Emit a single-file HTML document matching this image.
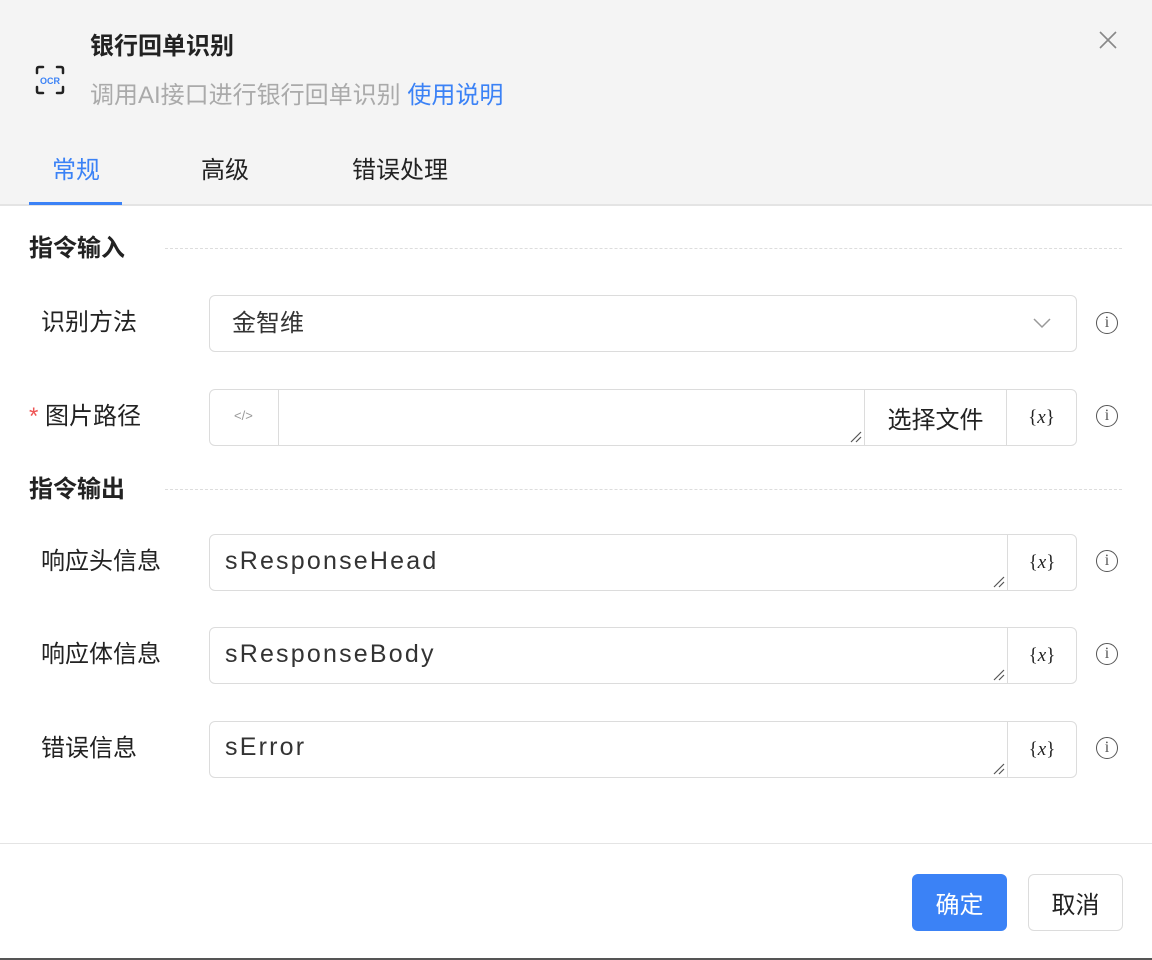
<!DOCTYPE html>
<html><head><meta charset="utf-8"><style>
*{box-sizing:border-box;margin:0;padding:0}
body{width:1152px;height:960px;background:#fff;font-family:"Liberation Sans","Noto Sans CJK SC",sans-serif;position:relative;overflow:hidden;color:#222}
.hdr{position:absolute;left:0;top:0;width:1152px;height:206px;background:#f4f4f4;border-bottom:2px solid #e4e4e4}
.abs{position:absolute}
.lbl{position:absolute;left:41px;font-size:24px;color:#222;line-height:32px}
.sec{position:absolute;left:29px;font-size:24px;font-weight:bold;line-height:32px}
.dash{position:absolute;left:165px;width:957px;border-top:1px dashed #ddd}
.box{position:absolute;border:1px solid #dcdcdc;border-radius:6px;background:#fff}
.cell{position:absolute;top:0;bottom:0;border-left:1px solid #dcdcdc;display:flex;align-items:center;justify-content:center}
.val{position:absolute;left:15px;top:11px;font-size:25px;letter-spacing:2.2px;color:#333;line-height:30px}
.x{font-family:"Liberation Serif",serif;font-size:19px;color:#222}
.info{position:absolute;left:1096px;width:22px;height:22px;border:1.3px solid #555;border-radius:50%;font-family:"Liberation Serif",serif;font-size:16px;line-height:20px;text-align:center;color:#555}
.grip{position:absolute;right:2px;bottom:2px;width:12px;height:12px}
</style></head><body>
<div class="hdr">
 <svg class="abs" style="left:34px;top:64px" width="32" height="32" viewBox="0 0 32 32" fill="none" stroke="#222" stroke-width="2.5" stroke-linecap="round"><path d="M3 9V5Q3 3 5 3H9M23 3H27Q29 3 29 5V9M29 23V27Q29 29 27 29H23M9 29H5Q3 29 3 27V23"/><text x="16" y="20" font-size="9" font-weight="bold" fill="#3b82f6" stroke="none" text-anchor="middle" font-family="Liberation Sans">OCR</text></svg>
 <div class="abs" style="left:90px;top:31px;font-size:24px;font-weight:bold;line-height:32px">银行回单识别</div>
 <div class="abs" style="left:90px;top:80px;font-size:24px;color:#aaa;line-height:32px">调用AI接口进行银行回单识别 <span style="color:#3b82f6">使用说明</span></div>
 <svg class="abs" style="left:1098px;top:30px" width="20" height="20" viewBox="0 0 20 20" stroke="#888" stroke-width="1.6"><path d="M2 2L18 18M18 2L2 18"/></svg>
 <div class="abs" style="left:52px;top:155px;font-size:24px;color:#3b82f6;line-height:32px">常规</div>
 <div class="abs" style="left:29px;top:202px;width:93px;height:3px;background:#3b82f6"></div>
 <div class="abs" style="left:201px;top:155px;font-size:24px;line-height:32px">高级</div>
 <div class="abs" style="left:352px;top:155px;font-size:24px;line-height:32px">错误处理</div>
</div>

<div class="sec" style="top:233px">指令输入</div><div class="dash" style="top:248px"></div>
<div class="lbl" style="top:307px">识别方法</div>
<div class="box" style="left:209px;top:295px;width:868px;height:57px"><div class="abs" style="left:22px;top:12px;font-size:24px;color:#333;line-height:32px">金智维</div>
<svg class="abs" style="left:822px;top:20px" width="20" height="14" viewBox="0 0 20 14" fill="none" stroke="#999" stroke-width="1.5"><path d="M2 3L10 11L18 3"/></svg></div>
<div class="info" style="top:312px">i</div>

<div class="lbl" style="top:401px;left:29px"><span style="color:#e55">*</span> 图片路径</div>
<div class="box" style="left:209px;top:389px;width:868px;height:57px">
 <div class="abs" style="left:24px;top:18px;font-size:13px;color:#999">&lt;/&gt;</div>
 <div class="cell" style="left:68px;width:586px;justify-content:flex-start"><svg class="grip" viewBox="0 0 12 12" stroke="#555" stroke-width="1.2"><path d="M1 11L11 1M6 11L11 6"/></svg></div>
 <div class="cell" style="left:654px;width:142px;font-size:24px">选择文件</div>
 <div class="cell" style="left:796px;right:0;border-left:1px solid #dcdcdc"><span class="x">{<i>x</i>}</span></div>
</div>
<div class="info" style="top:405px">i</div>

<div class="sec" style="top:474px">指令输出</div><div class="dash" style="top:489px"></div>

<div class="lbl" style="top:546px">响应头信息</div>
<div class="box" style="left:209px;top:534px;width:868px;height:57px"><div class="val">sResponseHead</div>
 <div class="cell" style="left:797px;right:0"><span class="x">{<i>x</i>}</span></div>
 <svg class="grip" style="right:71px" viewBox="0 0 12 12" stroke="#555" stroke-width="1.2"><path d="M1 11L11 1M6 11L11 6"/></svg></div>
<div class="info" style="top:550px">i</div>

<div class="lbl" style="top:639px">响应体信息</div>
<div class="box" style="left:209px;top:627px;width:868px;height:57px"><div class="val">sResponseBody</div>
 <div class="cell" style="left:797px;right:0"><span class="x">{<i>x</i>}</span></div>
 <svg class="grip" style="right:71px" viewBox="0 0 12 12" stroke="#555" stroke-width="1.2"><path d="M1 11L11 1M6 11L11 6"/></svg></div>
<div class="info" style="top:643px">i</div>

<div class="lbl" style="top:733px">错误信息</div>
<div class="box" style="left:209px;top:721px;width:868px;height:57px"><div class="val" style="top:10px">sError</div>
 <div class="cell" style="left:797px;right:0"><span class="x">{<i>x</i>}</span></div>
 <svg class="grip" style="right:71px" viewBox="0 0 12 12" stroke="#555" stroke-width="1.2"><path d="M1 11L11 1M6 11L11 6"/></svg></div>
<div class="info" style="top:737px">i</div>

<div class="abs" style="left:0;top:843px;width:1152px;border-top:1px solid #e4e4e4"></div>
<div class="abs" style="left:912px;top:874px;width:95px;height:57px;background:#3b82f6;border-radius:6px;color:#fff;font-size:24px;display:flex;align-items:center;justify-content:center">确定</div>
<div class="abs" style="left:1028px;top:874px;width:95px;height:57px;border:1px solid #dcdcdc;border-radius:6px;font-size:24px;display:flex;align-items:center;justify-content:center">取消</div>
<div class="abs" style="left:0;top:958px;width:1152px;height:2px;background:#555"></div>
</body></html>
